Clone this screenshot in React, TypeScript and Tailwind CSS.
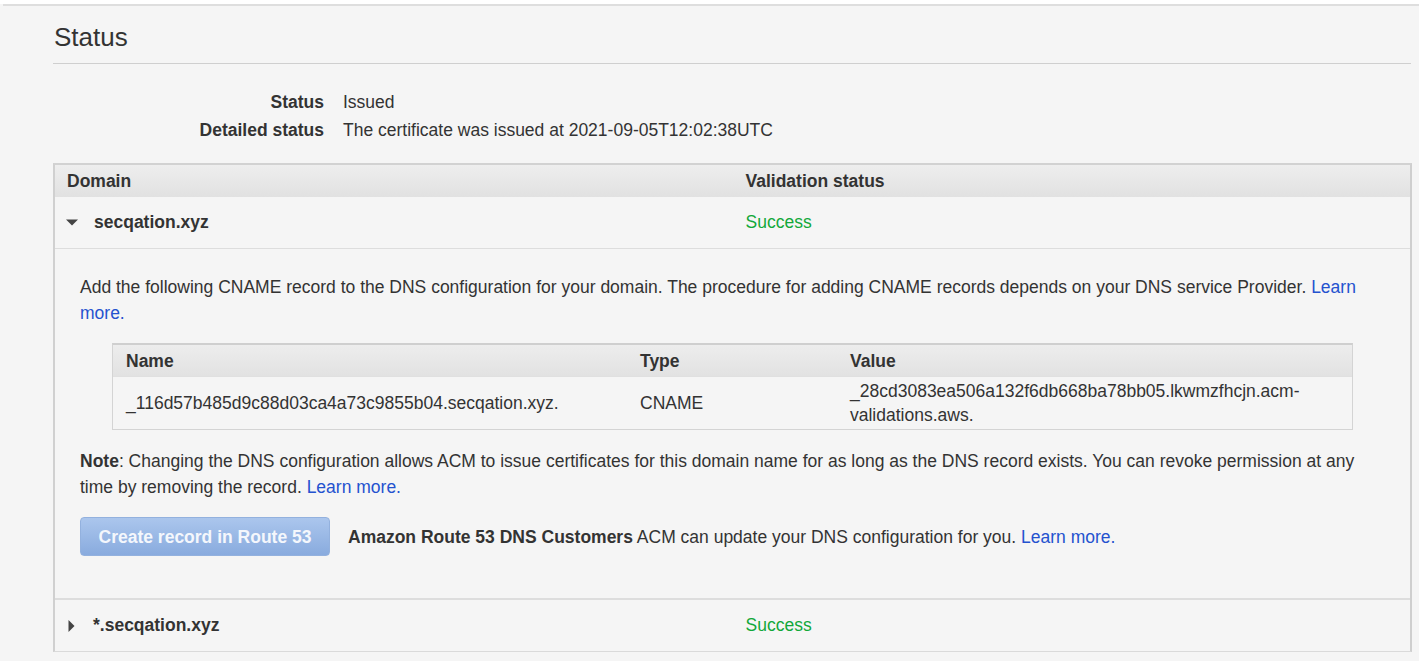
import React from 'react'

const font = { fontFamily: '"Liberation Sans", Arial, sans-serif' }

function Link({ children }: { children: React.ReactNode }) {
  return <a className="text-[#2452cf] cursor-pointer">{children}</a>
}

function ArrowDown() {
  return (
    <svg width="12" height="7" viewBox="0 0 12 7" className="shrink-0">
      <path d="M0 0.5 L12 0.5 L6 6.5 Z" fill="#444" />
    </svg>
  )
}

function ArrowRight() {
  return (
    <svg width="7" height="12" viewBox="0 0 7 12" className="shrink-0">
      <path d="M0.5 0 L6.5 6 L0.5 12 Z" fill="#444" />
    </svg>
  )
}

function KeyValue({ label, value }: { label: string; value: string }) {
  return (
    <div className="flex leading-[28px]">
      <div className="w-[271px] text-right font-bold">{label}</div>
      <div className="pl-[19px]">{value}</div>
    </div>
  )
}

function RecordTable() {
  return (
    <div className="mx-[32px] mt-[17px] border border-[#d4d4d4] border-t-2 border-t-[#cfcfcf]">
      <div className="grid grid-cols-[513px_210px_1fr] h-[31px] items-center font-bold bg-gradient-to-b from-[#ededed] to-[#e2e2e2]">
        <div className="pl-[13px]">Name</div>
        <div className="pl-[14px]">Type</div>
        <div className="pl-[14px]">Value</div>
      </div>
      <div className="grid grid-cols-[513px_210px_1fr] min-h-[52px] items-center leading-6 py-0.5 border-t border-[#e0e0e0]">
        <div className="pl-[13px]">_116d57b485d9c88d03ca4a73c9855b04.secqation.xyz.</div>
        <div className="pl-[14px]">CNAME</div>
        <div className="pl-[14px]">_28cd3083ea506a132f6db668ba78bb05.lkwmzfhcjn.acm-validations.aws.</div>
      </div>
    </div>
  )
}

export default function App() {
  return (
    <div style={font} className="min-h-[661px] bg-[#f5f5f5] text-[17.5px] text-[#333]">
      <div className="ml-[3px] border-t-2 border-[#dedede] mt-[4px]">
        <div className="pl-[50px] pr-[7px]">
          <div className="mr-[1px] border-b border-[#cfcfcf] pt-[15px] pb-[10px]">
            <h1 className="text-[26px] leading-[32px] text-[#333] pl-[1px]">Status</h1>
          </div>

          <div className="pt-[24px]">
            <KeyValue label="Status" value="Issued" />
            <KeyValue label="Detailed status" value="The certificate was issued at 2021-09-05T12:02:38UTC" />
          </div>

          <div className="mt-[19px] border-t-2 border-t-[#d2d2d2] border-l-2 border-l-[#d0d0d0] border-r-2 border-r-[#cfcfcf] border-b border-b-[#dadada]">
            <div className="grid grid-cols-2 h-[32px] items-center font-bold bg-gradient-to-b from-[#eeeeee] to-[#e1e1e1]">
              <div className="pl-[12px]">Domain</div>
              <div className="pl-[13px]">Validation status</div>
            </div>

            <div className="grid grid-cols-2 h-[52px] items-center border-b border-[#dddddd]">
              <div className="flex items-center pl-[11px] gap-[16px] font-bold">
                <ArrowDown />
                <span>secqation.xyz</span>
              </div>
              <div className="pl-[13px] text-[#12a83a]">Success</div>
            </div>

            <div className="px-[25px] pt-[25px] pb-[42px] border-b-2 border-[#dddddd] leading-[26px]">
              <p>
                Add the following CNAME record to the DNS configuration for your domain. The procedure for adding CNAME
                records depends on your DNS service Provider. <Link>Learn more.</Link>
              </p>

              <RecordTable />

              <p className="mt-[18px]">
                <span className="font-bold">Note</span>: Changing the DNS configuration allows ACM to issue certificates
                for this domain name for as long as the DNS record exists. You can revoke permission at any time by
                removing the record. <Link>Learn more.</Link>
              </p>

              <div className="mt-[17px] flex items-center gap-[18px]">
                <button className="w-[250px] h-[39px] rounded-[4px] border border-[#93b1de] bg-gradient-to-b from-[#abc6ed] to-[#89abde] text-[#f4f7fc] font-bold">
                  Create record in Route 53
                </button>
                <div>
                  <span className="font-bold">Amazon Route 53 DNS Customers</span> ACM can update your DNS configuration
                  for you. <Link>Learn more.</Link>
                </div>
              </div>
            </div>

            <div className="grid grid-cols-2 h-[51px] items-center">
              <div className="flex items-center pl-[13px] gap-[18px] font-bold">
                <ArrowRight />
                <span>*.secqation.xyz</span>
              </div>
              <div className="pl-[13px] text-[#12a83a]">Success</div>
            </div>
          </div>
        </div>
      </div>
    </div>
  )
}
